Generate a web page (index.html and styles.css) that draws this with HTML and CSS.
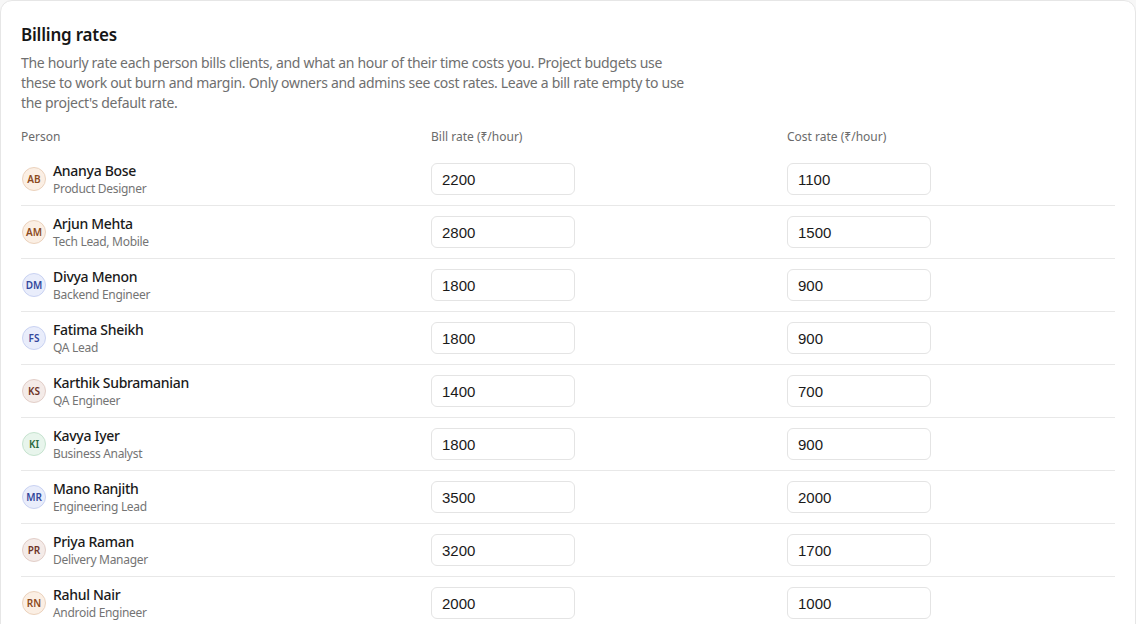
FILE: index.html
```html
<!DOCTYPE html>
<html lang="en">
<head>
    <meta charset="UTF-8">
    <meta name="viewport" content="width=device-width, initial-scale=1.0">
    <title>Billing rates</title>
    <link rel="stylesheet" href="styles.css">
</head>
<body>
    <section class="card">
        <h2>Billing rates</h2>
        <p class="desc">The hourly rate each person bills clients, and what an hour of their time costs you. Project budgets use these to work out burn and margin. Only owners and admins see cost rates. Leave a bill rate empty to use the project's default rate.</p>

        <div class="rates">
            <div class="rates-head">
                <span>Person</span>
                <span>Bill rate (₹/hour)</span>
                <span>Cost rate (₹/hour)</span>
            </div>

            <div class="rate-row">
                <div class="person"><span class="avatar peach">AB</span><div><div class="name">Ananya Bose</div><div class="role">Product Designer</div></div></div>
                <input type="text" value="2200">
                <input type="text" value="1100">
            </div>
            <div class="rate-row">
                <div class="person"><span class="avatar peach">AM</span><div><div class="name">Arjun Mehta</div><div class="role">Tech Lead, Mobile</div></div></div>
                <input type="text" value="2800">
                <input type="text" value="1500">
            </div>
            <div class="rate-row">
                <div class="person"><span class="avatar blue">DM</span><div><div class="name">Divya Menon</div><div class="role">Backend Engineer</div></div></div>
                <input type="text" value="1800">
                <input type="text" value="900">
            </div>
            <div class="rate-row">
                <div class="person"><span class="avatar blue">FS</span><div><div class="name">Fatima Sheikh</div><div class="role">QA Lead</div></div></div>
                <input type="text" value="1800">
                <input type="text" value="900">
            </div>
            <div class="rate-row">
                <div class="person"><span class="avatar rose">KS</span><div><div class="name">Karthik Subramanian</div><div class="role">QA Engineer</div></div></div>
                <input type="text" value="1400">
                <input type="text" value="700">
            </div>
            <div class="rate-row">
                <div class="person"><span class="avatar green">KI</span><div><div class="name">Kavya Iyer</div><div class="role">Business Analyst</div></div></div>
                <input type="text" value="1800">
                <input type="text" value="900">
            </div>
            <div class="rate-row">
                <div class="person"><span class="avatar blue">MR</span><div><div class="name">Mano Ranjith</div><div class="role">Engineering Lead</div></div></div>
                <input type="text" value="3500">
                <input type="text" value="2000">
            </div>
            <div class="rate-row">
                <div class="person"><span class="avatar rose">PR</span><div><div class="name">Priya Raman</div><div class="role">Delivery Manager</div></div></div>
                <input type="text" value="3200">
                <input type="text" value="1700">
            </div>
            <div class="rate-row">
                <div class="person"><span class="avatar peach">RN</span><div><div class="name">Rahul Nair</div><div class="role">Android Engineer</div></div></div>
                <input type="text" value="2000">
                <input type="text" value="1000">
            </div>
        </div>
    </section>
</body>
</html>
```

FILE: styles.css
```css
body {
    font-family: "Noto Sans", sans-serif;
    background-color: #f7f7f7;
    color: #1a1a1a;
    margin: 0;
}

.card {
    background: #fff;
    border: 1px solid #e6e6e6;
    border-radius: 12px;
    padding: 20px;
    min-height: 700px;
}

.card h2 {
    margin: 2px 0 0;
    font-size: 17px;
    line-height: 24px;
    font-weight: 600;
    letter-spacing: -0.2px;
    color: #161616;
}

.desc {
    margin: 6px 0 0;
    max-width: 670px;
    font-size: 14px;
    line-height: 20px;
    letter-spacing: -0.3px;
    color: #6f6f6f;
}

.rates-head,
.rate-row {
    display: grid;
    grid-template-columns: 410px 356px 1fr;
    align-items: center;
}

.rates-head {
    margin-top: 11px;
    height: 24px;
    font-size: 12px;
    color: #6b6b6b;
}

.rate-row {
    padding: 9px 0;
    border-bottom: 1px solid #e8e8e8;
}

.rates-head + .rate-row {
    padding-top: 14px;
}

.person {
    display: flex;
    align-items: center;
    gap: 7px;
}

.avatar {
    width: 22px;
    height: 22px;
    border-radius: 50%;
    border: 1px solid;
    display: flex;
    align-items: center;
    justify-content: center;
    font-size: 10px;
    font-weight: 600;
    margin-left: 1px;
    flex-shrink: 0;
}

.avatar.peach { background: #fbefe4; border-color: #ebd2bd; color: #8b4a1c; }
.avatar.blue { background: #e9edfb; border-color: #c9d2f2; color: #33479b; }
.avatar.rose { background: #f4ebe8; border-color: #e2cec8; color: #6e3428; }
.avatar.green { background: #e8f5ec; border-color: #c6e3cf; color: #2d6a3d; }

.name {
    font-size: 14px;
    line-height: 17px;
    font-weight: 500;
    letter-spacing: -0.3px;
    color: #1a1a1a;
}

.role {
    margin-top: 2px;
    font-size: 12px;
    line-height: 15px;
    letter-spacing: -0.3px;
    color: #747474;
}

.rate-row input {
    width: 144px;
    height: 32px;
    box-sizing: border-box;
    border: 1px solid #e4e4e4;
    border-radius: 6px;
    padding: 0 10px;
    font-family: "Liberation Sans", Arial, sans-serif;
    font-size: 15px;
    color: #1a1a1a;
    background: #fff;
}
```
